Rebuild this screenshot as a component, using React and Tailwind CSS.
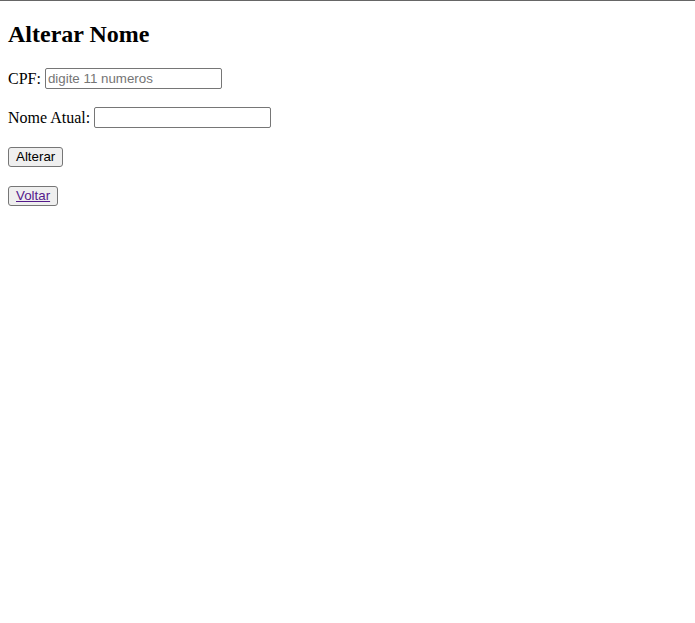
export default function App() {
  return (
    <div className="min-h-screen bg-white border-t border-[#666666] font-['Liberation_Serif',serif] text-black">
      <div className="px-2">
        <h2 className="mt-[20px] mb-[20px] text-2xl font-bold leading-[27px]">Alterar Nome</h2>

        <div className="flex flex-col gap-4">
          <div className="flex items-start h-[23px] text-base leading-[21px]">
            <span className="mr-[4px]">CPF:</span>
            <input
              type="text"
              placeholder="digite 11 numeros"
              className="w-[177px] h-[21px] px-[2px] border border-[#767676] rounded-[2px] font-['Liberation_Sans',Arial,sans-serif] text-[13.33px] leading-[15px] placeholder:text-[#757575] outline-none"
            />
          </div>

          <div className="flex items-start h-[23px] text-base leading-[21px]">
            <span className="mr-[4px]">Nome Atual:</span>
            <input
              type="text"
              className="w-[177px] h-[21px] px-[2px] border border-[#767676] rounded-[2px] font-['Liberation_Sans',Arial,sans-serif] text-[13.33px] leading-[15px] outline-none"
            />
          </div>

          <div className="flex items-start h-[23px] pt-[1px]">
            <button className="h-[20px] px-[7px] bg-[#efefef] border border-[#767676] rounded-[3px] font-['Liberation_Sans',Arial,sans-serif] text-[13.33px] leading-[16px] text-black">
              Alterar
            </button>
          </div>

          <div className="flex items-start h-[23px] pt-[1px]">
            <button className="h-[20px] px-[7px] bg-[#efefef] border border-[#767676] rounded-[3px] font-['Liberation_Sans',Arial,sans-serif] text-[13.33px] leading-[16px]">
              <a href="#" className="text-[#551a8b] underline">Voltar</a>
            </button>
          </div>
        </div>
      </div>
    </div>
  );
}
